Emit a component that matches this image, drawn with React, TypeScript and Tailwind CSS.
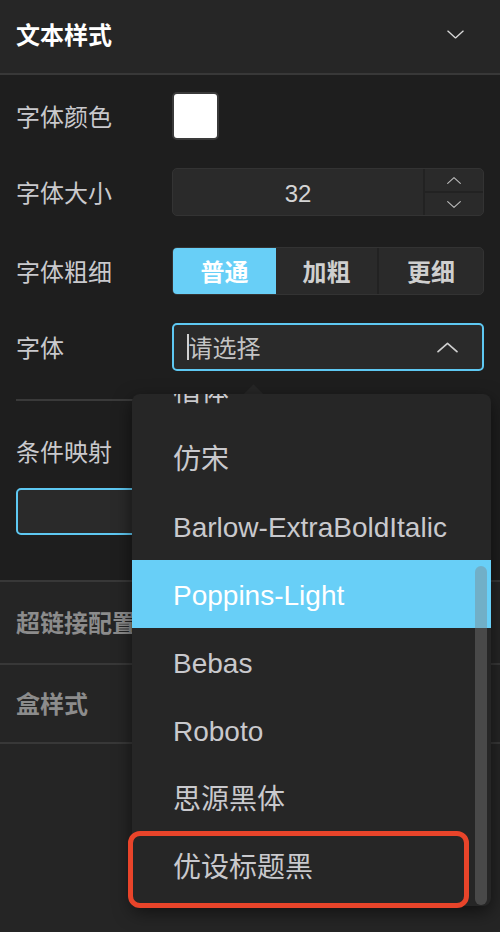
import React from "react";

const font = { fontFamily: '"Liberation Sans", "Noto Sans CJK SC", sans-serif' };

function Chevron({ dir, className }: { dir: "up" | "down"; className?: string }) {
  return (
    <svg viewBox="0 0 20 10" className={className} fill="none" stroke="currentColor" strokeWidth="1.6" strokeLinecap="round" strokeLinejoin="round">
      {dir === "down" ? <polyline points="1,1 10,9 19,1" /> : <polyline points="1,9 10,1 19,9" />}
    </svg>
  );
}

export default function App() {
  const items = ["楷体", "仿宋", "Barlow-ExtraBoldItalic", "Poppins-Light", "Bebas", "Roboto", "思源黑体", "优设标题黑"];
  return (
    <div className="relative w-[500px] h-[932px] overflow-hidden bg-[#252525] text-[#c9c9cd]" style={font}>
      {/* header */}
      <div className="h-[75px] flex items-center justify-between pl-4 pr-[36px] bg-[#262626] border-b-2 border-[#383838]">
        <span className="text-[24px] leading-none font-bold text-white -mt-[2px]">文本样式</span>
        <Chevron dir="down" className="w-[17px] h-[9px] text-[#d8d8d8] -mt-[4px]" />
      </div>

      {/* main */}
      <div className="bg-[#1e1e1e] px-4 pt-[17px] pb-[45px]">
        <div className="flex items-center h-[48px]">
          <span className="w-[156px] text-[24px] leading-none pt-[4px]">字体颜色</span>
          <div className="w-[47px] h-[48px] rounded-[5px] border-2 border-[#3a3a3a] bg-[#3a3a3a] p-0">
            <div className="w-full h-full rounded-[3px] bg-white" />
          </div>
        </div>
        <div className="flex items-center h-[48px] mt-[28px]">
          <span className="w-[156px] text-[24px] leading-none pt-[4px]">字体大小</span>
          <div className="flex-1 h-[48px] flex rounded-[5px] border border-[#333] bg-[#2a2a2a]">
            <div className="flex-1 flex items-center justify-center text-[24px] text-[#d4d4d4] pt-[3px]">32</div>
            <div className="w-[60px] flex flex-col border-l-2 border-[#222]">
              <div className="flex-1 flex items-center justify-center border-b-2 border-[#222]">
                <Chevron dir="up" className="w-[14px] h-[7px] text-[#bdbdbd]" />
              </div>
              <div className="flex-1 flex items-center justify-center">
                <Chevron dir="down" className="w-[14px] h-[7px] text-[#bdbdbd]" />
              </div>
            </div>
          </div>
        </div>
        <div className="flex items-center h-[48px] mt-[31px]">
          <span className="w-[156px] text-[24px] leading-none pt-[4px]">字体粗细</span>
          <div className="flex-1 h-[48px] flex rounded-[5px] overflow-hidden border border-[#333] bg-[#2a2a2a] text-[24px] font-bold">
            <div className="w-[103px] flex items-center justify-center bg-[#68cff7] text-white pt-[3px]">普通</div>
            <div className="w-[103px] flex items-center justify-center border-r-2 border-[#222] text-[#cfcfcf] pt-[3px]">加粗</div>
            <div className="flex-1 flex items-center justify-center text-[#cfcfcf] pt-[3px]">更细</div>
          </div>
        </div>
        <div className="flex items-center h-[48px] mt-[28px]">
          <span className="w-[156px] text-[24px] leading-none pt-[4px]">字体</span>
          <div className="flex-1 h-[48px] flex items-center rounded-[5px] border-2 border-[#5ec8f2] bg-[#2a2a2a] pl-[13px] pr-[24px]">
            <span className="w-[1.5px] h-[26px] bg-[#d0d0d0]" />
            <span className="flex-1 text-[24px] text-[#c4c4c4] leading-none pt-[4px]">请选择</span>
            <Chevron dir="up" className="w-[21px] h-[11px] text-[#cfcfcf]" />
          </div>
        </div>
        <div className="h-[2px] bg-[#3a3a3a] mt-[28px]" />
        <div className="mt-[34px] h-[32px] flex items-center text-[24px] leading-none pt-[4px]">条件映射</div>
        <div className="mt-[21px] h-[47px] rounded-[5px] border-2 border-[#5ec8f2] bg-[#2a2a2a]" />
      </div>

      {/* collapsed sections */}
      <div className="border-t-2 border-[#383838] h-[83px] flex items-center px-4 pt-[2px] text-[24px] font-bold text-[#8c8c8c] leading-none">超链接配置</div>
      <div className="border-t-2 border-[#383838] h-[79px] flex items-center px-4 pt-[2px] text-[24px] font-bold text-[#8c8c8c] leading-none">盒样式</div>
      <div className="border-t-2 border-[#383838]" />

      {/* dropdown arrow */}
      <svg className="absolute left-[243px] top-[384px] w-[21px] h-[11px]" viewBox="0 0 20 10">
        <polygon points="0,10 10,0 20,10" fill="#262626" />
      </svg>

      {/* dropdown */}
      <div className="absolute left-[132px] top-[394px] w-[359px] h-[512px] rounded-[8px] bg-[#262626] overflow-hidden shadow-[0_6px_18px_rgba(0,0,0,0.55)]">
        <div className="-mt-[38px]">
          {items.map((it) => (
            <div
              key={it}
              className={
                it === "Poppins-Light"
                  ? "h-[68px] flex items-center pl-[41px] pt-[4px] text-[28px] leading-none bg-[#68cff7] text-white"
                  : "h-[68px] flex items-center pl-[41px] pt-[4px] text-[28px] leading-none text-[#c9c9cd]"
              }
            >
              {it}
            </div>
          ))}
        </div>
        <div className="absolute right-[4px] top-[172px] w-[12px] h-[339px] rounded-full bg-[rgba(128,128,128,0.4)]" />
      </div>

      {/* annotation */}
      <div className="absolute left-[128px] top-[831px] w-[341px] h-[77px] rounded-[12px] border-[5px] border-[#e8442a]" />
    </div>
  );
}
